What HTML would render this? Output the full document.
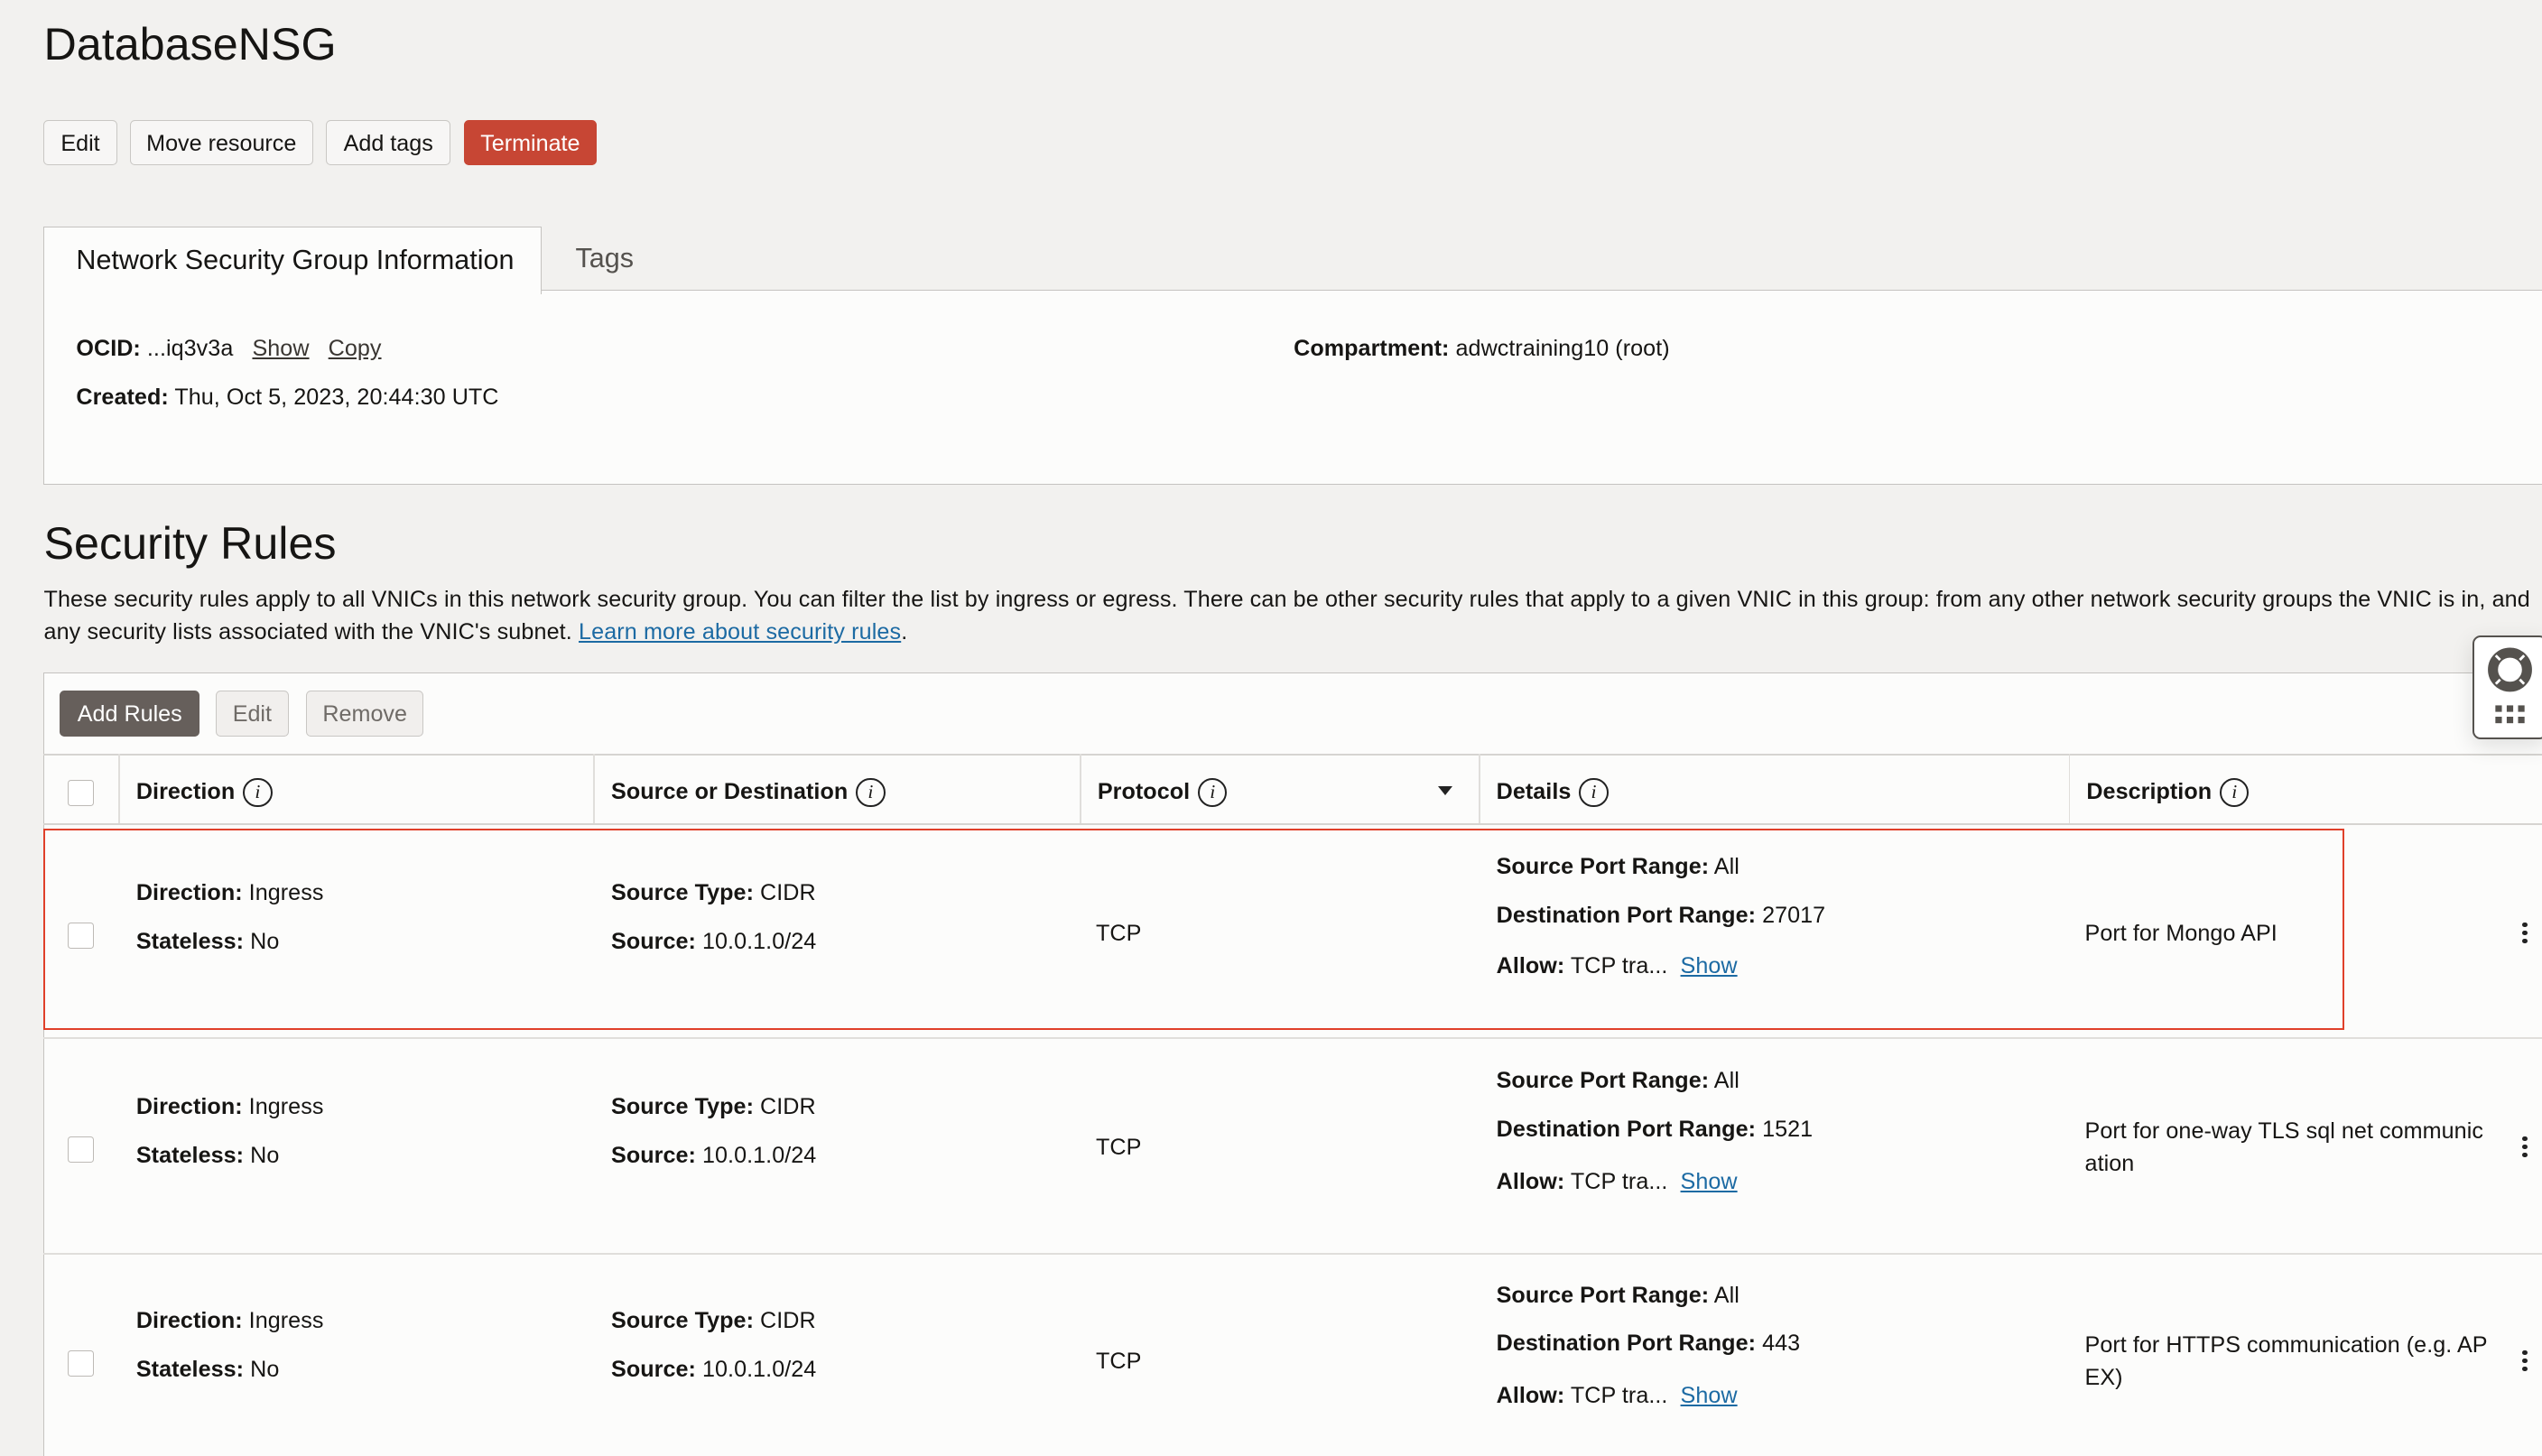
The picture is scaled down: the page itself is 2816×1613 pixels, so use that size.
<!DOCTYPE html>
<html><head><meta charset="utf-8"><style>
html,body{margin:0;padding:0;overflow:hidden;background:#f2f1ef;}
#w{zoom:1.79592;position:relative;width:1568px;height:898px;font-family:"Liberation Sans",Arial,sans-serif;color:#161513;overflow:hidden;background:#f2f1ef;}
.a{position:absolute;white-space:nowrap;}
.t{position:absolute;white-space:nowrap;font-size:14px;line-height:16px;margin-top:1px;letter-spacing:0.03px;}
.btn{position:absolute;top:74px;height:27px;border:1px solid #c9c7c4;border-radius:3px;background:#f7f6f5;font-size:14px;line-height:28px;text-align:center;color:#161513;}
b{font-weight:bold;}
.lk{text-decoration:underline;color:#3a3632;}
.bl{text-decoration:underline;color:#1c6aa3;}
.cb{position:absolute;left:42px;width:15px;height:15px;border:1px solid #bdbab6;border-radius:2px;background:#fff;}
.ic{display:inline-block;width:18px;height:18px;border:1.3px solid #222;border-radius:50%;font:italic 12px/15px "Liberation Serif",serif;text-align:center;vertical-align:middle;margin-left:5px;box-sizing:border-box;}
.hl{position:absolute;background:#d6d4d1;}
.dots{position:absolute;left:1556px;width:3px;}
.dots i{display:block;width:3px;height:3px;border-radius:50%;background:#222;margin-bottom:2px;}
</style></head><body><div id="w">
<div class="a" style="left:27px;top:10px;font-size:28px;line-height:34px;">DatabaseNSG</div>
<div class="btn" style="left:27px;width:44px;">Edit</div>
<div class="btn" style="left:80px;width:112px;">Move resource</div>
<div class="btn" style="left:201px;width:76px;">Add tags</div>
<div class="btn" style="left:286px;width:81px;background:#c74634;border-color:#c74634;color:#fff;">Terminate</div>

<div class="a" style="left:27px;top:179px;width:1545px;height:119px;background:#fcfcfb;border:1px solid #c5c3c0;"></div>
<div class="a" style="left:27px;top:140px;width:306px;height:41px;background:#fcfcfb;border:1px solid #c5c3c0;border-bottom:none;"></div>
<div class="a" style="left:47px;top:151px;font-size:17px;line-height:19px;">Network Security Group Information</div>
<div class="a" style="left:355px;top:150px;font-size:17px;line-height:19px;color:#55524e;">Tags</div>
<div class="t" style="left:47px;top:206px;"><b>OCID:</b> ...iq3v3a&nbsp;&nbsp; <span class="lk">Show</span>&nbsp;&nbsp; <span class="lk">Copy</span></div>
<div class="t" style="left:47px;top:236px;"><b>Created:</b> Thu, Oct 5, 2023, 20:44:30 UTC</div>
<div class="t" style="left:798px;top:206px;"><b>Compartment:</b> adwctraining10 (root)</div>

<div class="a" style="left:27px;top:318px;font-size:28px;line-height:34px;">Security Rules</div>
<div class="t" style="left:27px;top:361px;letter-spacing:0.07px;">These security rules apply to all VNICs in this network security group. You can filter the list by ingress or egress. There can be other security rules that apply to a given VNIC in this group: from any other network security groups the VNIC is in, and</div>
<div class="t" style="left:27px;top:381px;letter-spacing:0.07px;">any security lists associated with the VNIC's subnet. <span class="bl">Learn more about security rules</span>.</div>

<div class="a" style="left:27px;top:415px;width:1545px;height:490px;background:#fcfcfb;border:1px solid #c5c3c0;"></div>
<div class="btn" style="left:37px;top:426px;width:85px;background:#665f5b;border-color:#665f5b;color:#fff;">Add Rules</div>
<div class="btn" style="left:133px;top:426px;width:44px;background:#f1efed;color:#6f6b67;">Edit</div>
<div class="btn" style="left:189px;top:426px;width:71px;background:#f1efed;color:#6f6b67;">Remove</div>

<div class="hl" style="left:27px;top:465px;width:1545px;height:1px;"></div>
<div class="hl" style="left:27px;top:508px;width:1545px;height:1px;"></div>
<div class="hl" style="left:73px;top:465px;width:1px;height:43px;background:#e0dedb;"></div>
<div class="hl" style="left:366px;top:465px;width:1px;height:43px;background:#e0dedb;"></div>
<div class="hl" style="left:666px;top:465px;width:1px;height:43px;background:#e0dedb;"></div>
<div class="hl" style="left:912px;top:465px;width:1px;height:43px;background:#e0dedb;"></div>
<div class="hl" style="left:1276px;top:465px;width:1px;height:43px;background:#e0dedb;"></div>
<div class="cb" style="top:481px;"></div>
<div class="t" style="left:84px;top:479px;"><b>Direction</b><span class="ic">i</span></div>
<div class="t" style="left:377px;top:479px;"><b>Source or Destination</b><span class="ic">i</span></div>
<div class="t" style="left:677px;top:479px;"><b>Protocol</b><span class="ic">i</span></div>
<div class="a" style="left:887px;top:485px;width:0;height:0;border-left:5px solid transparent;border-right:5px solid transparent;border-top:6px solid #222;"></div>
<div class="t" style="left:923px;top:479px;"><b>Details</b><span class="ic">i</span></div>
<div class="t" style="left:1287px;top:479px;"><b>Description</b><span class="ic">i</span></div>

<div class="hl" style="left:27px;top:640px;width:1545px;height:1px;background:#e0dedb;"></div>
<div class="hl" style="left:27px;top:773px;width:1545px;height:1px;background:#e0dedb;"></div>
<div class="a" style="left:27px;top:511px;width:1417px;height:122px;border:1.5px solid #e0402a;"></div>

<!-- row1 -->
<div class="cb" style="top:569px;"></div>
<div class="t" style="left:84px;top:542px;"><b>Direction:</b> Ingress</div>
<div class="t" style="left:84px;top:572px;"><b>Stateless:</b> No</div>
<div class="t" style="left:377px;top:542px;"><b>Source Type:</b> CIDR</div>
<div class="t" style="left:377px;top:572px;"><b>Source:</b> 10.0.1.0/24</div>
<div class="t" style="left:676px;top:567px;">TCP</div>
<div class="t" style="left:923px;top:526px;"><b>Source Port Range:</b> All</div>
<div class="t" style="left:923px;top:556px;"><b>Destination Port Range:</b> 27017</div>
<div class="t" style="left:923px;top:587px;"><b>Allow:</b> TCP tra...&nbsp; <span class="bl">Show</span></div>
<div class="t" style="left:1286px;top:567px;">Port for Mongo API</div>
<div class="dots" style="top:569px;"><i></i><i></i><i></i></div>

<!-- row2 -->
<div class="cb" style="top:701px;"></div>
<div class="t" style="left:84px;top:674px;"><b>Direction:</b> Ingress</div>
<div class="t" style="left:84px;top:704px;"><b>Stateless:</b> No</div>
<div class="t" style="left:377px;top:674px;"><b>Source Type:</b> CIDR</div>
<div class="t" style="left:377px;top:704px;"><b>Source:</b> 10.0.1.0/24</div>
<div class="t" style="left:676px;top:699px;">TCP</div>
<div class="t" style="left:923px;top:658px;"><b>Source Port Range:</b> All</div>
<div class="t" style="left:923px;top:688px;"><b>Destination Port Range:</b> 1521</div>
<div class="t" style="left:923px;top:720px;"><b>Allow:</b> TCP tra...&nbsp; <span class="bl">Show</span></div>
<div class="t" style="left:1286px;top:689px;">Port for one-way TLS sql net communic</div>
<div class="t" style="left:1286px;top:709px;">ation</div>
<div class="dots" style="top:701px;"><i></i><i></i><i></i></div>

<!-- row3 -->
<div class="cb" style="top:833px;"></div>
<div class="t" style="left:84px;top:806px;"><b>Direction:</b> Ingress</div>
<div class="t" style="left:84px;top:836px;"><b>Stateless:</b> No</div>
<div class="t" style="left:377px;top:806px;"><b>Source Type:</b> CIDR</div>
<div class="t" style="left:377px;top:836px;"><b>Source:</b> 10.0.1.0/24</div>
<div class="t" style="left:676px;top:831px;">TCP</div>
<div class="t" style="left:923px;top:790px;"><b>Source Port Range:</b> All</div>
<div class="t" style="left:923px;top:820px;"><b>Destination Port Range:</b> 443</div>
<div class="t" style="left:923px;top:852px;"><b>Allow:</b> TCP tra...&nbsp; <span class="bl">Show</span></div>
<div class="t" style="left:1286px;top:821px;">Port for HTTPS communication (e.g. AP</div>
<div class="t" style="left:1286px;top:841px;">EX)</div>
<div class="dots" style="top:833px;"><i></i><i></i><i></i></div>

<!-- help widget -->
<div class="a" style="left:1525px;top:392px;width:44px;height:62px;background:#fff;border:1.5px solid #55524e;border-radius:5px;box-shadow:0 4px 14px rgba(0,0,0,0.12);">
<svg width="44" height="62" viewBox="0 0 44 62" style="position:absolute;left:0;top:0">
<circle cx="22" cy="20" r="10.5" fill="none" stroke="#55524e" stroke-width="4.5"/>
<circle cx="22" cy="20" r="10.5" fill="none" stroke="#55524e" stroke-width="0.8" transform="scale(1)"/>
<g stroke="#fff" stroke-width="1.6"><line x1="13" y1="11" x2="17.5" y2="15.5"/><line x1="31" y1="11" x2="26.5" y2="15.5"/><line x1="13" y1="29" x2="17.5" y2="24.5"/><line x1="31" y1="29" x2="26.5" y2="24.5"/></g>
<circle cx="22" cy="20" r="13" fill="none" stroke="#55524e" stroke-width="1.2"/>
<circle cx="22" cy="20" r="8" fill="none" stroke="#55524e" stroke-width="1.2"/>
<g fill="#55524e"><rect x="13" y="42" width="4" height="4"/><rect x="20" y="42" width="4" height="4"/><rect x="27" y="42" width="4" height="4"/><rect x="13" y="49" width="4" height="4"/><rect x="20" y="49" width="4" height="4"/><rect x="27" y="49" width="4" height="4"/></g>
</svg></div>
</div></body></html>
